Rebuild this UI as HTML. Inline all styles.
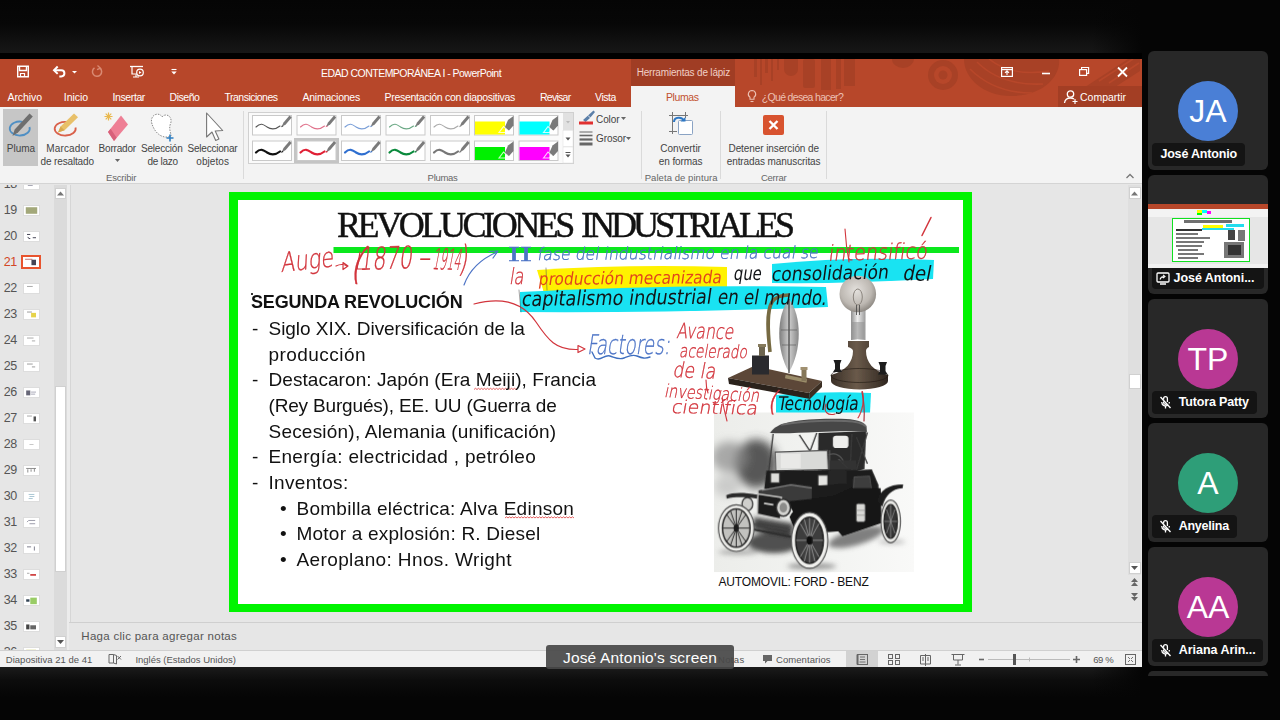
<!DOCTYPE html>
<html lang="es">
<head>
<meta charset="utf-8">
<title>EDAD CONTEMPORÁNEA I - PowerPoint</title>
<style>
*{box-sizing:border-box;margin:0;padding:0}
html,body{width:1280px;height:720px;overflow:hidden;background:#050505}
body{position:relative;font-family:"Liberation Sans",sans-serif;color:#444}
.abs{position:absolute}
#topgrad{left:0;top:0;width:1142px;height:53px;background:linear-gradient(#050505 0,#070707 45%,#171717 100%)}
#botgrad{left:0;top:667px;width:1142px;height:30px;background:linear-gradient(#1b1b1b 0,#0c0c0c 45%,#050505 100%)}
#screen{left:0;top:59px;width:1142px;height:608px;background:#e6e6e6;overflow:hidden}
/* ---- title bar ---- */
#titlebar{left:0;top:0;width:1142px;height:48px;background:#b7472a}
#titlebar .t{position:absolute;color:#fff;font-size:10.5px;white-space:nowrap;line-height:14px}
#ctx{left:631px;top:0;width:104px;height:27px;background:#a03d24}
#deco{left:737px;top:0;width:403px;height:48px;overflow:hidden}
.tab{position:absolute;top:30.5px;color:#fff;font-size:10.5px;line-height:14px;white-space:nowrap}
#plumastab{left:631px;top:27px;width:104px;height:22px;background:#f3f3f3;color:#c2512f;font-size:11px;text-align:center;line-height:24px}
/* ---- ribbon ---- */
#ribbon{left:0;top:48px;width:1142px;height:77px;background:#f3f3f3;border-bottom:1px solid #d4d4d4}
.rl{position:absolute;font-size:10px;line-height:13px;color:#444;white-space:nowrap}
.gl{position:absolute;font-size:9.5px;line-height:13px;color:#666;white-space:nowrap}
.sep{position:absolute;top:4px;width:1px;height:68px;background:#dadada}
/* ---- thumbs ---- */
.num{position:absolute;left:0;width:17px;text-align:right;font-size:12.5px;letter-spacing:-.3px;line-height:14px;color:#555}
.th{position:absolute;left:23px;width:17px;height:11px;background:#fff;border:1px solid #ddd}
/* ---- slide ---- */
#slide{left:229px;top:133px;width:743px;height:420px;background:#fff;border:9px solid #00f400;border-top-width:8px;border-bottom-width:8px}
.body{position:absolute;font-size:19px;line-height:26px;color:#111;white-space:nowrap}
.hw{position:absolute;white-space:nowrap;line-height:1;font-family:"DejaVu Sans",sans-serif}
/* ---- status ---- */
#notes{left:69px;top:563px;width:1073px;height:28px;background:#e6e6e6;border-top:1px solid #cfcfcf}
#status{left:0;top:591px;width:1142px;height:17px;background:#f1f1f1;border-top:1px solid #d0d0d0}
#status .s{position:absolute;top:3px;font-size:9.5px;line-height:11px;color:#555;white-space:nowrap}
/* ---- meet tiles ---- */
.tile{position:absolute;left:1148px;width:120px;height:119px;background:#282828;border-radius:6px;overflow:hidden}
.av{position:absolute;left:30px;top:30px;width:60px;height:60px;border-radius:50%;color:#fff;font-size:32px;line-height:60px;text-align:center}
.nm{position:absolute;left:4px;top:92px;height:23px;background:#141414;border-radius:4px;color:#fff;font-weight:bold;font-size:12.5px;line-height:23px;padding:0 8px;white-space:nowrap}
</style>
</head>
<body>
<div id="topgrad" class="abs"></div>
<div class="abs" style="left:0;top:53px;width:1142px;height:6px;background:#000"></div>
<div id="botgrad" class="abs"></div>
<div class="abs" style="left:1092px;top:0;width:50px;height:53px;background:linear-gradient(to right,rgba(5,5,5,0),#050505)"></div>
<div class="abs" style="left:1092px;top:667px;width:50px;height:30px;background:linear-gradient(to right,rgba(5,5,5,0),#050505)"></div>

<div id="screen" class="abs">

<div id="titlebar" class="abs">
  <div id="ctx" class="abs"></div>
  <div id="deco" class="abs">
    <svg width="403" height="48" viewBox="0 0 403 48">
      <g fill="#a84126">
        <rect x="17" y="0" width="3" height="18"/><rect x="23" y="0" width="2" height="26"/><rect x="28" y="0" width="3" height="14"/><rect x="34" y="0" width="2" height="22"/><rect x="40" y="0" width="2" height="11"/>
        <path d="M47 0h14v10a7 7 0 0 1-14 0z"/>
        <rect x="66" y="0" width="12" height="29" rx="2"/><rect x="84" y="0" width="10" height="31"/><rect x="99" y="0" width="5" height="30"/><rect x="107" y="0" width="11" height="27"/>
        <path d="M155 0h22a11 9 0 0 1-22 0z"/>
        <circle cx="206" cy="16" r="15"/>
        <path d="M227 0h95c2 16-14 36-46 37-28 1-49-17-49-37z"/>
        <path d="M345 30l46-30h12v12l-28 18z"/>
      </g>
      <circle cx="206" cy="16" r="9" fill="#b7472a"/><circle cx="206" cy="16" r="4.5" fill="#a84126"/>
      <g stroke="#b7472a" stroke-width="1.6" fill="none">
        <path d="M233 10q24 24 62 24"/><path d="M240 3q24 24 66 22"/><path d="M252 0q22 18 60 12"/><path d="M362 22l34-22M372 24l30-20"/>
      </g>
    </svg>
  </div>
  <!-- quick access icons -->
  <svg class="abs" style="left:16px;top:5px" width="170" height="18" viewBox="0 0 170 18" fill="none" stroke="#fff" stroke-width="1.4">
    <path d="M1.7 2.2h10.6v10.6h-10.6z"/><path d="M3.5 2.5v4h7v-4" /><path d="M4.5 12.5v-3h4v3" stroke-width="1.2"/>
    <path d="M38 6.2h7.3a3.1 3.1 0 0 1 0 6.2h-2" stroke-width="2"/><path d="M41.7 2.5l-3.7 3.7 3.7 3.7" stroke-width="2"/>
    <path d="M56 7l2.5 2.5 2.5-2.5z" fill="#fff" stroke="none"/>
    <g stroke="#d98a73"><path d="M84 4.2a4.6 4.6 0 1 1-5.5-.3" stroke-width="1.5"/><path d="M81.5 1.5l3 2.7-3.5 1.5" stroke-width="1.3"/></g>
    <path d="M114 2.5h13" stroke-width="1.3"/><path d="M116 3v7h5" stroke-width="1.2"/><circle cx="124" cy="8.5" r="3.3" stroke-width="1.2"/><path d="M123 7l2.5 1.5-2.5 1.5z" fill="#fff" stroke="none"/><path d="M120 10.5v2.5m-3 0h6" stroke-width="1.1"/>
    <path d="M155.5 5.5h5" stroke-width="1.1"/><path d="M155.3 7.5h5.4l-2.7 3z" fill="#fff" stroke="none"/>
  </svg>
  <div class="t" id="tt1" style="left:321px;top:7px;letter-spacing:-0.52px">EDAD CONTEMPORÁNEA I - PowerPoint</div>
  <div class="t" id="tt2" style="left:636.7px;top:7px;color:#f1cfc5;font-size:10px;letter-spacing:-0.19px">Herramientas de lápiz</div>
  <!-- window controls -->
  <svg class="abs" style="left:996px;top:4px" width="140" height="18" viewBox="0 0 140 18" fill="none" stroke="#fff" stroke-width="1.2">
    <rect x="5.6" y="4.6" width="10.8" height="8.8"/><path d="M5.6 6.6h10.8" /><path d="M11 12v-4m-2 1.8l2-2 2 2" stroke-width="1.1"/>
    <path d="M46 10.5h8" stroke-width="1.6"/>
    <rect x="83.6" y="6.6" width="7" height="5.8"/><path d="M85.6 6.5v-2h7v5.8h-2" />
    <path d="M122 4.5l9 9m0-9l-9 9" stroke-width="1.8"/>
  </svg>
  <!-- tabs -->
  <div class="tab" id="t0" style="left:7.5px;letter-spacing:-0.07px">Archivo</div>
  <div class="tab" id="t1" style="left:63.8px;letter-spacing:-0.05px">Inicio</div>
  <div class="tab" id="t2" style="left:112.5px;letter-spacing:-0.39px">Insertar</div>
  <div class="tab" id="t3" style="left:169.5px;letter-spacing:-0.45px">Diseño</div>
  <div class="tab" id="t4" style="left:224.5px;letter-spacing:-0.51px">Transiciones</div>
  <div class="tab" id="t5" style="left:302.5px;letter-spacing:-0.24px">Animaciones</div>
  <div class="tab" id="t6" style="left:384.5px;letter-spacing:-0.29px">Presentación con diapositivas</div>
  <div class="tab" id="t7" style="left:540px;letter-spacing:-0.73px">Revisar</div>
  <div class="tab" id="t8" style="left:595px;letter-spacing:-0.43px">Vista</div>
  <div id="plumastab" class="abs"></div><div class="tab" id="t11" style="left:666px;color:#c2512f;letter-spacing:-0.39px">Plumas</div>
  <svg class="abs" style="left:746px;top:30px" width="12" height="16" viewBox="0 0 12 16" fill="none" stroke="#ecc0b3" stroke-width="1.1"><path d="M6 1.5a3.7 3.7 0 0 0-2 6.8v2h4v-2a3.7 3.7 0 0 0-2-6.8z"/><path d="M4.5 12.5h3"/></svg>
  <div class="tab" id="t9" style="left:761.8px;color:#ecc0b3;font-size:10.5px;letter-spacing:-0.68px">¿Qué desea hacer?</div>
  <div class="abs" style="left:1058px;top:27px;width:84px;height:21px;background:#a33e24"></div>
  <svg class="abs" style="left:1063px;top:30px" width="16" height="16" viewBox="0 0 16 16" fill="none" stroke="#fff" stroke-width="1.3"><circle cx="7.5" cy="5" r="3.2"/><path d="M1.5 14c.5-4 3-5 6-5 1.5 0 2.5.3 3.5 1"/><path d="M12 10v5m-2.5-2.5h5" stroke-width="1.2"/></svg>
  <div class="tab" id="t10" style="left:1080.0px;letter-spacing:-0.01px">Compartir</div>
</div>


<div id="ribbon" class="abs">
  <div class="abs" style="left:3px;top:2px;width:35px;height:57px;background:#c6c6c6"></div>
  <!-- big icons -->
  <svg class="abs" style="left:0;top:3px" width="245" height="40" viewBox="0 0 245 40" fill="none">
    <path d="M29.5 17a10 7 0 1 1-7-5.2" stroke="#4f8fc4" stroke-width="1.8"/><path d="M12.5 26l2.2-6.5 14.8-16 3.3 3-14.8 16z" fill="#6e6e6e"/>
    <path d="M75.5 17.5a10.5 6.8 0 1 1-8-5.4" stroke="#d9604a" stroke-width="1.8"/><path d="M58 22.5l2.6-6 13.4-13 4 3.8-13.4 13z" fill="#e8c069"/><path d="M58 22.5l2.6-6 4 3.8z" fill="#d9a84e"/>
    <path d="M108 22l13-16.5 7 9-14 16.5z" fill="#ee7f95"/><path d="M108 22l2.6-3.2 6 9-2.6 3.2z" fill="#d8607a"/>
    <path d="M104.5 6.5h8m-4-4v8m-2.8-6.8l5.6 5.6m0-5.6l-5.6 5.6" stroke="#e9b84e" stroke-width="1.2"/>
    <path d="M152 14c-3-9 7-13 10-7 4-5 12 0 8 8-1 5 1 8 1 11-6 3-15 0-19-12z" fill="#fff" stroke="#8a8a8a" stroke-width="1" stroke-dasharray="1.5 1.2"/><path d="M170 24.5v7m-3.5-3.5h7" stroke="#2f7fc2" stroke-width="1.6"/>
    <path d="M206.6 3v24l5.4-5 3.7 8.5 3.2-1.5-3.7-8 7.5-.5z" fill="#fff" stroke="#777" stroke-width="1.1" stroke-linejoin="round"/>
  </svg>
  <svg class="abs" style="left:115px;top:52px" width="6" height="4"><path d="M0 0h5l-2.5 3z" fill="#666"/></svg>
  <div class="rl" id="r1" style="left:6.8px;top:34.5px;letter-spacing:0.01px">Pluma</div>
  <div class="rl" id="r2" style="left:46.3px;top:34.5px;letter-spacing:0.12px">Marcador</div>
  <div class="rl" id="r3" style="left:40.6px;top:47.5px;letter-spacing:-0.15px">de resaltado</div>
  <div class="rl" id="r4" style="left:98.6px;top:34.5px;letter-spacing:-0.19px">Borrador</div>
  <div class="rl" id="r5" style="left:141px;top:34.5px;letter-spacing:-0.20px">Selección</div>
  <div class="rl" id="r6" style="left:147.5px;top:47.5px;letter-spacing:-0.29px">de lazo</div>
  <div class="rl" id="r7" style="left:187.5px;top:34.5px;letter-spacing:-0.22px">Seleccionar</div>
  <div class="rl" id="r8" style="left:196.3px;top:47.5px;letter-spacing:0.06px">objetos</div>
  <div class="gl" id="g1" style="left:106px;top:63.7px;letter-spacing:-0.17px">Escribir</div>
  <div class="gl" id="g2" style="left:427.6px;top:63.7px;letter-spacing:-0.28px">Plumas</div>
  <div class="rl" id="r9" style="left:596px;top:5.5px;letter-spacing:-0.08px">Color</div>
  <div class="rl" id="r10" style="left:596px;top:25.3px;letter-spacing:-0.09px">Grosor</div>
  <div class="rl" id="r11" style="left:660.3px;top:34.5px;letter-spacing:0.01px">Convertir</div>
  <div class="rl" id="r12" style="left:658.8px;top:47.5px;letter-spacing:-0.09px">en formas</div>
  <div class="gl" id="g3" style="left:644.7px;top:63.7px;letter-spacing:0.06px">Paleta de pintura</div>
  <div class="rl" id="r13" style="left:728.5px;top:34.5px;letter-spacing:-0.09px">Detener inserción de</div>
  <div class="rl" id="r14" style="left:726.7px;top:47.5px;letter-spacing:-0.09px">entradas manuscritas</div>
  <div class="gl" id="g4" style="left:761px;top:63.7px;letter-spacing:-0.27px">Cerrar</div>
  <div class="sep" style="left:243px"></div>
  <!-- pen gallery -->
  <div class="abs" style="left:248px;top:5px;width:326px;height:52px;background:#fafafa;border:1px solid #d0d0d0"></div>
  <div class="abs" style="left:294px;top:31px;width:45px;height:25px;background:#c4c4c4"></div>
  <svg class="abs" style="left:248px;top:5px" width="326" height="52" viewBox="0 0 326 52"><g transform="translate(4,3)"><rect x=".5" y=".5" width="39" height="19.5" fill="#fff" stroke="#c9c9c9"/><path d="M4 12c5-5 8-2 11 0s8 3 13-1" fill="none" stroke="#555" stroke-width="1.1" stroke-linecap="round"/><path d="M29.5 12l2-4.5 6-7 2.2 2-6 7z" fill="#7a7a7a"/><path d="M29 12.3l1-2 1.5 1.2z" fill="#555"/></g><g transform="translate(48.5,3)"><rect x=".5" y=".5" width="39" height="19.5" fill="#fff" stroke="#c9c9c9"/><path d="M4 12c5-5 8-2 11 0s8 3 13-1" fill="none" stroke="#e0708a" stroke-width="1.1" stroke-linecap="round"/><path d="M29.5 12l2-4.5 6-7 2.2 2-6 7z" fill="#7a7a7a"/><path d="M29 12.3l1-2 1.5 1.2z" fill="#e0708a"/></g><g transform="translate(93,3)"><rect x=".5" y=".5" width="39" height="19.5" fill="#fff" stroke="#c9c9c9"/><path d="M4 12c5-5 8-2 11 0s8 3 13-1" fill="none" stroke="#7a9fd8" stroke-width="1.1" stroke-linecap="round"/><path d="M29.5 12l2-4.5 6-7 2.2 2-6 7z" fill="#7a7a7a"/><path d="M29 12.3l1-2 1.5 1.2z" fill="#7a9fd8"/></g><g transform="translate(137.5,3)"><rect x=".5" y=".5" width="39" height="19.5" fill="#fff" stroke="#c9c9c9"/><path d="M4 12c5-5 8-2 11 0s8 3 13-1" fill="none" stroke="#6aa884" stroke-width="1.1" stroke-linecap="round"/><path d="M29.5 12l2-4.5 6-7 2.2 2-6 7z" fill="#7a7a7a"/><path d="M29 12.3l1-2 1.5 1.2z" fill="#6aa884"/></g><g transform="translate(182,3)"><rect x=".5" y=".5" width="39" height="19.5" fill="#fff" stroke="#c9c9c9"/><path d="M4 12c5-5 8-2 11 0s8 3 13-1" fill="none" stroke="#aaa" stroke-width="1.1" stroke-linecap="round"/><path d="M29.5 12l2-4.5 6-7 2.2 2-6 7z" fill="#7a7a7a"/><path d="M29 12.3l1-2 1.5 1.2z" fill="#aaa"/></g><g transform="translate(4,28.5)"><rect x=".5" y=".5" width="39" height="19.5" fill="#fff" stroke="#c9c9c9"/><path d="M4 12c5-5 8-2 11 0s8 3 13-1" fill="none" stroke="#111" stroke-width="2.2" stroke-linecap="round"/><path d="M29.5 12l2-4.5 6-7 2.2 2-6 7z" fill="#7a7a7a"/><path d="M29 12.3l1-2 1.5 1.2z" fill="#111"/></g><g transform="translate(48.5,28.5)"><rect x=".5" y=".5" width="39" height="19.5" fill="#fff" stroke="#c9c9c9"/><path d="M4 12c5-5 8-2 11 0s8 3 13-1" fill="none" stroke="#e02035" stroke-width="2.2" stroke-linecap="round"/><path d="M29.5 12l2-4.5 6-7 2.2 2-6 7z" fill="#7a7a7a"/><path d="M29 12.3l1-2 1.5 1.2z" fill="#e02035"/></g><g transform="translate(93,28.5)"><rect x=".5" y=".5" width="39" height="19.5" fill="#fff" stroke="#c9c9c9"/><path d="M4 12c5-5 8-2 11 0s8 3 13-1" fill="none" stroke="#2f6fd0" stroke-width="2.2" stroke-linecap="round"/><path d="M29.5 12l2-4.5 6-7 2.2 2-6 7z" fill="#7a7a7a"/><path d="M29 12.3l1-2 1.5 1.2z" fill="#2f6fd0"/></g><g transform="translate(137.5,28.5)"><rect x=".5" y=".5" width="39" height="19.5" fill="#fff" stroke="#c9c9c9"/><path d="M4 12c5-5 8-2 11 0s8 3 13-1" fill="none" stroke="#0a8a3c" stroke-width="2.2" stroke-linecap="round"/><path d="M29.5 12l2-4.5 6-7 2.2 2-6 7z" fill="#7a7a7a"/><path d="M29 12.3l1-2 1.5 1.2z" fill="#0a8a3c"/></g><g transform="translate(182,28.5)"><rect x=".5" y=".5" width="39" height="19.5" fill="#fff" stroke="#c9c9c9"/><path d="M4 12c5-5 8-2 11 0s8 3 13-1" fill="none" stroke="#777" stroke-width="2.2" stroke-linecap="round"/><path d="M29.5 12l2-4.5 6-7 2.2 2-6 7z" fill="#7a7a7a"/><path d="M29 12.3l1-2 1.5 1.2z" fill="#777"/></g><g transform="translate(226,3)"><rect x=".5" y=".5" width="39" height="19.5" fill="#fff" stroke="#c9c9c9"/><rect x="1" y="6.5" width="30" height="13" fill="#ffff00"/><path d="M30.5 13l3.5-8 5.5-4v9.5l-4.5 5z" fill="#7a7a7a"/><path d="M25 17.5l4.5-6 3.5 3-2 3z" fill="none" stroke="#fff" stroke-opacity=".8" stroke-width="1.2"/></g><g transform="translate(270.5,3)"><rect x=".5" y=".5" width="39" height="19.5" fill="#fff" stroke="#c9c9c9"/><rect x="1" y="6.5" width="30" height="13" fill="#00ffff"/><path d="M30.5 13l3.5-8 5.5-4v9.5l-4.5 5z" fill="#7a7a7a"/><path d="M25 17.5l4.5-6 3.5 3-2 3z" fill="none" stroke="#fff" stroke-opacity=".8" stroke-width="1.2"/></g><g transform="translate(226,28.5)"><rect x=".5" y=".5" width="39" height="19.5" fill="#fff" stroke="#c9c9c9"/><rect x="1" y="6.5" width="30" height="13" fill="#00f000"/><path d="M30.5 13l3.5-8 5.5-4v9.5l-4.5 5z" fill="#7a7a7a"/><path d="M25 17.5l4.5-6 3.5 3-2 3z" fill="none" stroke="#fff" stroke-opacity=".8" stroke-width="1.2"/></g><g transform="translate(270.5,28.5)"><rect x=".5" y=".5" width="39" height="19.5" fill="#fff" stroke="#c9c9c9"/><rect x="1" y="6.5" width="30" height="13" fill="#ff00ff"/><path d="M30.5 13l3.5-8 5.5-4v9.5l-4.5 5z" fill="#7a7a7a"/><path d="M25 17.5l4.5-6 3.5 3-2 3z" fill="none" stroke="#fff" stroke-opacity=".8" stroke-width="1.2"/></g>
    <rect x="315" y="1" width="10" height="17" fill="#e1e1e1"/><path d="M318 9h4l-2 2.5z" fill="#bbb"/>
    <rect x="315" y="18.5" width="10" height="16" fill="#fff" stroke="#ddd" stroke-width=".5"/><path d="M317.5 25.5h5l-2.5 3z" fill="#555"/>
    <rect x="315" y="35" width="10" height="16" fill="#fff" stroke="#ddd" stroke-width=".5"/><path d="M317.5 40.5h5" stroke="#555" stroke-width="1"/><path d="M317.5 42.5h5l-2.5 3z" fill="#555"/>
  </svg>
  <!-- color / grosor -->
  <svg class="abs" style="left:578px;top:3px" width="18" height="36" viewBox="0 0 18 36" fill="none">
    <path d="M5 10l5-4.5 5.5-5 1.5 1.5-5 6-4.5 4z" fill="#5b7fa8"/><path d="M10 5.5l2.5 2.5" stroke="#fff" stroke-width=".8"/>
    <rect x="1" y="11.5" width="14" height="3" fill="#e03030"/>
    <path d="M1.5 22h13" stroke="#666" stroke-width="1"/><path d="M1.5 25.5h13" stroke="#666" stroke-width="1.6"/><path d="M1.5 29.5h13" stroke="#666" stroke-width="2.2"/><path d="M1.5 34h13" stroke="#666" stroke-width="3"/>
  </svg>
  <svg class="abs" style="left:621px;top:10px" width="6" height="4"><path d="M0 0h5l-2.5 3z" fill="#666"/></svg>
  <svg class="abs" style="left:626px;top:30px" width="6" height="4"><path d="M0 0h5l-2.5 3z" fill="#666"/></svg>
  <div class="sep" style="left:641px"></div>
  <!-- convertir -->
  <svg class="abs" style="left:668px;top:4px" width="28" height="28" viewBox="0 0 28 28" fill="none">
    <path d="M4.5 1v22M1 4.5h19M17.5 1v6M1 20.5h8" stroke="#777" stroke-width="1"/>
    <rect x="10.5" y="9.5" width="14" height="14" rx="1" fill="#fff" stroke="#8aa3c4" stroke-width="1"/>
    <path d="M6 11c0-5 8-6 10-1" stroke="#2f78c4" stroke-width="2"/><path d="M12.5 10.5h5v-4.5z" fill="#2f78c4"/>
  </svg>
  <div class="sep" style="left:720px"></div>
  <div class="abs" style="left:763px;top:8px;width:21px;height:20px;background:#d8532f;border-radius:2px"></div>
  <svg class="abs" style="left:763px;top:8px" width="21" height="20" viewBox="0 0 21 20"><path d="M6.5 6l8 8m0-8l-8 8" stroke="#fff" stroke-width="2.4"/></svg>
  <div class="sep" style="left:826px"></div>
  <svg class="abs" style="left:1125px;top:66px" width="10" height="6" viewBox="0 0 10 6"><path d="M1.5 5l3.5-3.5 3.5 3.5" stroke="#777" stroke-width="1.3" fill="none"/></svg>
</div>


<div class="abs" style="left:0;top:126px;width:71px;height:465px;overflow:hidden;background:#e6e6e6">
  <div style="position:absolute;left:0;top:-126px;width:71px;height:600px"><div class="num" style="top:118px;color:#555">18</div><div class="th" style="top:120px"><svg width="15" height="9" viewBox="0 0 17 11" style="display:block"><rect x="4" y="3" width="6" height="4" fill="#889"/></svg></div><div class="num" style="top:144px;color:#555">19</div><div class="th" style="top:146px"><svg width="15" height="9" viewBox="0 0 17 11" style="display:block"><rect x="1.5" y="1.5" width="14" height="8" fill="#a3a87a"/></svg></div><div class="num" style="top:170px;color:#555">20</div><div class="th" style="top:172px"><svg width="15" height="9" viewBox="0 0 17 11" style="display:block"><path d="M3 3h4M4 6q1 3 3 2M10 7h4" stroke="#445" stroke-width="1.2" fill="none"/></svg></div><div class="num" style="top:196px;color:#d24726">21</div><div class="th" style="top:196px;left:21px;width:20px;height:14px;border:2px solid #e8542e"><svg width="16" height="10" viewBox="0 0 17 11" style="display:block"><path d="M2 2.5h8" stroke="#b66" stroke-width="1"/><rect x="9" y="3" width="5" height="6" fill="#445"/></svg></div><div class="num" style="top:222px;color:#555">22</div><div class="th" style="top:224px"><svg width="15" height="9" viewBox="0 0 17 11" style="display:block"><path d="M3 3h7" stroke="#999" stroke-width="1"/></svg></div><div class="num" style="top:248px;color:#555">23</div><div class="th" style="top:250px"><svg width="15" height="9" viewBox="0 0 17 11" style="display:block"><path d="M3 2.5h6" stroke="#888" stroke-width="1"/><rect x="8" y="3.5" width="6" height="5.5" fill="#e6d34a"/></svg></div><div class="num" style="top:274px;color:#555">24</div><div class="th" style="top:276px"><svg width="15" height="9" viewBox="0 0 17 11" style="display:block"><path d="M3 2.5h8M9 6h4" stroke="#999" stroke-width="1"/></svg></div><div class="num" style="top:300px;color:#555">25</div><div class="th" style="top:302px"><svg width="15" height="9" viewBox="0 0 17 11" style="display:block"><path d="M3 2.5h7M9 6h4" stroke="#888" stroke-width="1"/></svg></div><div class="num" style="top:326px;color:#555">26</div><div class="th" style="top:328px"><svg width="15" height="9" viewBox="0 0 17 11" style="display:block"><rect x="2" y="3" width="5" height="6" fill="#667"/><path d="M8 5h6M8 7.5h5" stroke="#99a" stroke-width="1"/></svg></div><div class="num" style="top:352px;color:#555">27</div><div class="th" style="top:354px"><svg width="15" height="9" viewBox="0 0 17 11" style="display:block"><path d="M3 2.5h6" stroke="#999" stroke-width="1"/><rect x="11" y="3" width="3" height="6" fill="#555"/></svg></div><div class="num" style="top:378px;color:#555">28</div><div class="th" style="top:380px"><svg width="15" height="9" viewBox="0 0 17 11" style="display:block"><path d="M6 5.5h5" stroke="#bbb" stroke-width="1"/></svg></div><div class="num" style="top:404px;color:#555">29</div><div class="th" style="top:406px"><svg width="15" height="9" viewBox="0 0 17 11" style="display:block"><path d="M2 3h12M4 4v4M8 4v3M12 3v4" stroke="#777" stroke-width="1"/></svg></div><div class="num" style="top:430px;color:#555">30</div><div class="th" style="top:432px"><svg width="15" height="9" viewBox="0 0 17 11" style="display:block"><path d="M5 3h7M6 5.5h6M5 8h5" stroke="#9bc" stroke-width="1"/></svg></div><div class="num" style="top:456px;color:#555">31</div><div class="th" style="top:458px"><svg width="15" height="9" viewBox="0 0 17 11" style="display:block"><path d="M3 5l2-2h8M6 7h7" stroke="#889" stroke-width="1" fill="none"/></svg></div><div class="num" style="top:482px;color:#555">32</div><div class="th" style="top:484px"><svg width="15" height="9" viewBox="0 0 17 11" style="display:block"><path d="M3 3.5h5M12 3v5" stroke="#667" stroke-width="1"/></svg></div><div class="num" style="top:508px;color:#555">33</div><div class="th" style="top:510px"><svg width="15" height="9" viewBox="0 0 17 11" style="display:block"><path d="M3 4h3" stroke="#999" stroke-width="1"/><path d="M7 6h7" stroke="#c33" stroke-width="2"/></svg></div><div class="num" style="top:534px;color:#555">34</div><div class="th" style="top:536px"><svg width="15" height="9" viewBox="0 0 17 11" style="display:block"><rect x="2" y="4" width="4" height="3" fill="#345"/><rect x="7" y="2" width="8" height="8" fill="#9c6"/></svg></div><div class="num" style="top:560px;color:#555">35</div><div class="th" style="top:562px"><svg width="15" height="9" viewBox="0 0 17 11" style="display:block"><rect x="2" y="3" width="4" height="6" fill="#444"/><rect x="7" y="4" width="7" height="5" fill="#666"/></svg></div><div class="num" style="top:586px;color:#555">36</div><div class="th" style="top:588px"><svg width="15" height="9" viewBox="0 0 17 11" style="display:block"><rect x="2" y="2" width="12" height="7" fill="#dd9"/></svg></div></div>
  <div class="abs" style="left:54px;top:0;width:13px;height:465px;background:#dbdbdb"></div>
  <div class="abs" style="left:55px;top:3px;width:11px;height:11px;background:#fff;border:1px solid #d0d0d0"></div>
  <svg class="abs" style="left:57px;top:6px" width="7" height="5"><path d="M0 4.5h7l-3.5-4z" fill="#777"/></svg>
  <div class="abs" style="left:55px;top:201px;width:11px;height:186px;background:#fff;border:1px solid #d0d0d0"></div>
  <div class="abs" style="left:55px;top:451px;width:11px;height:12px;background:#fff;border:1px solid #d0d0d0"></div>
  <svg class="abs" style="left:57px;top:455px" width="7" height="5"><path d="M0 0h7l-3.5 4z" fill="#555"/></svg>
  <div class="abs" style="left:67px;top:0;width:4px;height:465px;background:#ececec;border-right:1px solid #d6d6d6"></div>
</div>
<!-- main scrollbar -->
<div class="abs" style="left:1128px;top:126px;width:13px;height:390px;background:#dfdfdf"></div>
<div class="abs" style="left:1129px;top:128px;width:12px;height:12px;background:#fff;border:1px solid #d0d0d0"></div>
<svg class="abs" style="left:1131px;top:132px" width="7" height="5"><path d="M0 4.5h7l-3.5-4z" fill="#777"/></svg>
<div class="abs" style="left:1129px;top:315px;width:12px;height:15px;background:#fff;border:1px solid #d0d0d0"></div>
<div class="abs" style="left:1129px;top:503px;width:12px;height:12px;background:#fff;border:1px solid #d0d0d0"></div>
<svg class="abs" style="left:1131px;top:507px" width="7" height="5"><path d="M0 0h7l-3.5 4z" fill="#555"/></svg>
<svg class="abs" style="left:1131px;top:519px" width="8" height="24" viewBox="0 0 8 24" fill="#666"><path d="M0 4h7l-3.5-4zM0 8h7l-3.5-4z"/><path d="M0 15h7l-3.5 4zM0 19h7l-3.5 4z"/></svg>


<div id="slide" class="abs"></div>
<div id="pg" class="abs" style="left:0;top:-59px;width:1142px;height:720px">
  <!-- highlights -->
  <svg class="abs" style="left:0;top:0" width="1142" height="720" viewBox="0 0 1142 720">
    <defs><filter id="b1" x="-5%" y="-5%" width="110%" height="110%"><feGaussianBlur stdDeviation="0.7"/></filter>
    <filter id="b2" x="-20%" y="-20%" width="140%" height="140%"><feGaussianBlur stdDeviation="5"/></filter>
    <filter id="b3" x="-20%" y="-20%" width="140%" height="140%"><feGaussianBlur stdDeviation="1.6"/></filter></defs>
    <rect x="333.5" y="247" width="625.5" height="6" fill="#0be81d"/>
    <path d="M537 270q90-6 190-3v22q-90 6-183 4z" fill="#fff200"/>
    <path d="M772 264q80-8 162-4l-1 19q-90 5-161 4z" fill="#19e3f2"/>
    <path d="M520 292q150-8 306-5l2 20q-150 6-308 5z" fill="#19e3f2"/>
    <path d="M776 395q50-4 95-2l-1 20q-50 2-94 0z" fill="#19e3f2"/>

    <defs>
      <radialGradient id="gl" cx=".45" cy=".4" r=".6"><stop offset="0" stop-color="#e4e1dd"/><stop offset=".7" stop-color="#bdb8b2"/><stop offset="1" stop-color="#8f8a84"/></radialGradient>
      <linearGradient id="nk" x1="0" x2="1"><stop offset="0" stop-color="#8e8e8e"/><stop offset=".45" stop-color="#ededed"/><stop offset="1" stop-color="#9a9a9a"/></linearGradient>
      <linearGradient id="bs" x1="0" x2="1"><stop offset="0" stop-color="#3a2f27"/><stop offset=".45" stop-color="#6a5a4a"/><stop offset="1" stop-color="#2e251f"/></linearGradient>
      <linearGradient id="tb" x1="0" x2="1"><stop offset="0" stop-color="#6f6f6f"/><stop offset=".5" stop-color="#c9c9c9"/><stop offset="1" stop-color="#7a7a7a"/></linearGradient>
    </defs>
    <g filter="url(#b1)">
      <path d="M728 378l26-12 68 15-13 12z" fill="#5b4737"/>
      <path d="M728 378l81 15 1 6-81-15z" fill="#2b211a"/>
      <path d="M809 393l13-12v6l-12 12z" fill="#3a2d23"/>
      <path d="M770 352c-2-18-4-40 2-50 4-6 10-7 17-7" fill="none" stroke="#766a42" stroke-width="3.6"/>
      <rect x="752" y="355.5" width="17" height="19" fill="#2a2a2d"/>
      <rect x="759" y="345" width="6" height="11" fill="#6d654f"/><rect x="758" y="344" width="8" height="3" fill="#857a5c"/>
      <path d="M789 299c-13 16-13 52 0 73 13-21 13-57 0-73z" fill="url(#tb)" opacity=".9"/>
      <path d="M789 299v74" stroke="#3c3c3c" stroke-width="1.2"/>
      <path d="M781 330h16M782 345h14" stroke="#555" stroke-width="1" opacity=".6"/>
      <rect x="785" y="377" width="22" height="3.5" fill="#9b8d6a" transform="rotate(12 796 379)"/>
      <rect x="801.5" y="368" width="5" height="13" fill="#85775a"/><rect x="800.5" y="367" width="7" height="3" fill="#a09070"/>
      <!-- right bulb -->
      <rect x="851" y="308" width="14.5" height="32" fill="url(#nk)"/>
      <circle cx="857.8" cy="294" r="18.3" fill="url(#gl)"/>
      <ellipse cx="857.8" cy="297" rx="4.5" ry="8" fill="none" stroke="#8b857e" stroke-width="1"/>
      <path d="M856.5 305v10M859.5 305v10" stroke="#444" stroke-width=".8"/>
      <rect x="852" y="322" width="12.5" height="17" fill="#8f8f8f" opacity=".55"/>
      <path d="M848 341h21v6c-2 1-3 2-3 4 0 11 7 20 22 24v6a28.5 8.5 0 0 1-57 0v-6c15-4 22-13 22-24 0-2-2-3-5-4z" fill="url(#bs)"/>
      <ellipse cx="859.5" cy="375.5" rx="28.5" ry="7" fill="none" stroke="#1f1813" stroke-width="1" opacity=".6"/>
      <path d="M833.5 360h8l-1.5 4v5l2 3h-9l2-3v-5z" fill="#1b1b1d"/>
      <path d="M878.5 362h8.5l-1.5 4v5l2 3.5h-9.5l2-3.5v-5z" fill="#1b1b1d"/>
    </g>


    <defs>
      <linearGradient id="cbg" x1="0" x2="1"><stop offset="0" stop-color="#ecedea"/><stop offset=".6" stop-color="#f3f4f2"/><stop offset="1" stop-color="#f9f9f8"/></linearGradient>
      <clipPath id="cc"><rect x="0" y="0" width="900" height="720"/></clipPath>
      <filter id="c1" x="-10%" y="-10%" width="120%" height="120%"><feGaussianBlur stdDeviation="3.2"/></filter>
      <filter id="c2" x="-30%" y="-30%" width="160%" height="160%"><feGaussianBlur stdDeviation="22"/></filter>
      <filter id="c3" x="-30%" y="-30%" width="160%" height="160%"><feGaussianBlur stdDeviation="12"/></filter>
    </defs>
    <g transform="translate(714 412.5) scale(.2222)">
      <rect x="0" y="0" width="900" height="718" fill="url(#cbg)"/>
      <g clip-path="url(#cc)">
        <g filter="url(#c2)">
          <ellipse cx="190" cy="230" rx="95" ry="110" fill="#3c3c3c" opacity=".85"/>
          <ellipse cx="70" cy="200" rx="80" ry="70" fill="#8a8a8a" opacity=".7"/>
          <ellipse cx="60" cy="330" rx="60" ry="50" fill="#aaa" opacity=".5"/>
        </g>
        <g filter="url(#c3)">
          <ellipse cx="270" cy="585" rx="120" ry="48" fill="#3e3e3e" opacity=".9"/>
          <ellipse cx="640" cy="560" rx="130" ry="36" fill="#6a6a6a" opacity=".85" transform="rotate(-16 640 560)"/>
          <ellipse cx="440" cy="692" rx="110" ry="13" fill="#666" opacity=".7"/>
          <ellipse cx="110" cy="628" rx="90" ry="11" fill="#777" opacity=".6"/>
          <ellipse cx="800" cy="582" rx="60" ry="9" fill="#888" opacity=".6"/>
          <path d="M180 470l180 30-10 60-180-30z" fill="#2c2c2c" opacity=".9"/>
        </g>
        <g filter="url(#c1)">
          <!-- back panel under roof -->
          <path d="M470 92l215-8-8 170-60 16-150-10z" fill="#2a2a2a"/>
          <rect x="535" y="104" width="70" height="56" rx="14" fill="#eeeeec"/>
          <!-- roof canopy -->
          <path d="M252 92c14-24 40-40 90-50 60-12 140-16 230-14 60 2 104 10 114 34l2 26c-60-6-140-4-220 0-90 4-160 8-216 4z" fill="#474747"/>
          <path d="M300 56c60-14 180-22 290-18 50 2 80 10 92 24" fill="none" stroke="#6a6a6a" stroke-width="8"/>
          <!-- struts -->
          <path d="M266 96l-30 250M462 92l-110 300M384 100l130 200M620 96l-10 200M690 90l-50 170M640 110l50 120" stroke="#3a3a3a" stroke-width="6" fill="none"/>
          <!-- windshield -->
          <path d="M275 178l235-8 4 86-236 6z" fill="#d9dad8" stroke="#555" stroke-width="5"/>
          <path d="M300 185h90v65h-90z" fill="#f0f0ee" opacity=".7"/>
          <!-- interior clutter -->
          <path d="M515 190c30-10 60 0 70 40M520 170v100M560 210l40 40" stroke="#555" stroke-width="6" fill="none"/>
          <rect x="520" y="215" width="120" height="60" fill="#333" opacity=".85"/>
          <!-- cowl / dashboard band -->
          <path d="M236 262l290-4 20 76-320 10z" fill="#1e1e1e"/>
          <path d="M515 258l100-2 0 90-100 0z" fill="#252525"/>
          <!-- cowl lamps -->
          <path d="M255 272h40v44h-40z" fill="#dededb" stroke="#333" stroke-width="4"/><path d="M468 282h44v48h-44z" fill="#e4e4e1" stroke="#333" stroke-width="4"/>
          <!-- rear seat / body -->
          <path d="M600 262l110-6 30 70 6 150-150 30z" fill="#1c1c1c"/>
          <path d="M630 290l70-4 10 70-84 6z" fill="#3c3c3c" stroke="#666" stroke-width="3"/>
          <!-- hood -->
          <path d="M200 350l150-30 140 20-60 70-130 10-100-30z" fill="#3b3b3b"/>
          <path d="M215 350l130-24 120 18" stroke="#8a8a8a" stroke-width="5" fill="none"/>
          <path d="M440 330l180-10 10 90-190 10z" fill="#1b1b1b"/>
          <!-- main body side -->
          <path d="M330 400l200-20 90-40 130 0 4 150-140 40-120 10-120-60z" fill="#161616"/>
          <!-- radiator -->
          <path d="M197 366l106 16-4 98-104-22z" fill="#1b1b1b" stroke="#c4c4c2" stroke-width="7"/>
          <path d="M225 408l42 7" stroke="#d0d0ce" stroke-width="8"/>
          <!-- headlamps -->
          <ellipse cx="150" cy="412" rx="24" ry="30" fill="#cfcfcc" stroke="#3a3a3a" stroke-width="6"/>
          <ellipse cx="312" cy="428" rx="32" ry="38" fill="#d5d5d2" stroke="#2a2a2a" stroke-width="7"/>
          <ellipse cx="312" cy="428" rx="17" ry="22" fill="#8c8c8a"/>
          <!-- front-left fender -->
          <path d="M55 372c30-14 80-14 140-2l-2 18c-50-8-100-10-136 0z" fill="#2a2a2a"/>
          <!-- centre fender + running board -->
          <path d="M340 470c30-60 110-100 170-50l80 100 160-50 8 26-180 60-70-80c-40-40-100-20-150 40z" fill="#131313"/>
          <!-- rear fender -->
          <path d="M735 400c10-50 50-76 116-76l-2 16c-50 4-76 30-92 84z" fill="#1e1e1e"/>
          <!-- tank -->
          <rect x="640" y="410" width="40" height="82" rx="8" fill="#d8d8d5" stroke="#555" stroke-width="4"/>
          <path d="M640 440h40M640 462h40" stroke="#888" stroke-width="3"/>
          <!-- axle / springs -->
          <path d="M150 520l250 50" stroke="#2f2f2f" stroke-width="9"/>
          <path d="M170 500l170 30" stroke="#444" stroke-width="5"/>
          <!-- wheels -->
          <ellipse cx="100" cy="520" rx="80" ry="105" fill="#ecece9" stroke="#4a4a4a" stroke-width="5"/>
          <ellipse cx="100" cy="520" rx="62" ry="86" fill="#c2c2bf" stroke="#2e2e2e" stroke-width="7"/>
          <path d="M100 436v168M40 520h120M56 458l88 124M144 458l-88 124M74 442l52 156M126 442l-52 156" stroke="#2a2a2a" stroke-width="4.5"/>
          <ellipse cx="100" cy="520" rx="12" ry="16" fill="#1e1e1e"/>
          <ellipse cx="430" cy="575" rx="82" ry="126" fill="#f0f0ed" stroke="#4a4a4a" stroke-width="5"/>
          <ellipse cx="430" cy="575" rx="62" ry="104" fill="#3d3d3d" stroke="#222" stroke-width="7"/>
          <path d="M430 474v202M370 575h120M388 500l84 150M472 500l-84 150M406 480l48 190M454 480l-48 190" stroke="#9a9a9a" stroke-width="4"/>
          <ellipse cx="430" cy="575" rx="14" ry="20" fill="#111"/>
          <ellipse cx="795" cy="490" rx="44" ry="96" fill="#eaeae7" stroke="#4a4a4a" stroke-width="5"/>
          <ellipse cx="795" cy="490" rx="30" ry="76" fill="#353535" stroke="#222" stroke-width="6"/>
          <path d="M795 416v148M766 490h58M776 436l38 108M814 436l-38 108" stroke="#8f8f8f" stroke-width="3.5"/>
        </g>
      </g>
    </g>
    <path d="M474 389.5L475.5 388.3L477.0 389.5L478.5 388.3L480.0 389.5L481.5 388.3L483.0 389.5L484.5 388.3L486.0 389.5L487.5 388.3L489.0 389.5L490.5 388.3L492.0 389.5L493.5 388.3L495.0 389.5L496.5 388.3L498.0 389.5L499.5 388.3L501.0 389.5L502.5 388.3L504.0 389.5L505.5 388.3L507.0 389.5L508.5 388.3L510.0 389.5L511.5 388.3L513.0 389.5L514.5 388.3L516.0 389.5L517.5 388.3" stroke="#e03a3a" stroke-width=".8" fill="none"/>
    <path d="M505 518L506.5 516.8L508.0 518.0L509.5 516.8L511.0 518.0L512.5 516.8L514.0 518.0L515.5 516.8L517.0 518.0L518.5 516.8L520.0 518.0L521.5 516.8L523.0 518.0L524.5 516.8L526.0 518.0L527.5 516.8L529.0 518.0L530.5 516.8L532.0 518.0L533.5 516.8L535.0 518.0L536.5 516.8L538.0 518.0L539.5 516.8L541.0 518.0L542.5 516.8L544.0 518.0L545.5 516.8L547.0 518.0L548.5 516.8L550.0 518.0L551.5 516.8L553.0 518.0L554.5 516.8L556.0 518.0L557.5 516.8L559.0 518.0L560.5 516.8L562.0 518.0L563.5 516.8L565.0 518.0L566.5 516.8L568.0 518.0L569.5 516.8L571.0 518.0L572.5 516.8L574.0 518.0" stroke="#e03a3a" stroke-width=".8" fill="none"/>
    <g fill="none" stroke-linecap="round" stroke-linejoin="round">
      <path d="M336 266q6-3 11 0M343 262.5l5 3.5-5 3.5z" stroke="#d2343c" stroke-width="1.2"/>
      <path d="M360 252l-3 17h8" stroke="#d2343c" stroke-width="1.2"/>
      <path d="M464 285c5-14 17-26 33-33M489 251.5l9-.5-5 7" stroke="#4d74c6" stroke-width="1.2"/>
      <path d="M474 304c30-8 50 0 62 18s20 28 41 27.5M578 345.5l7 3.5-7 3.5z" stroke="#d2343c" stroke-width="1.2"/>
      <path d="M592 352l3 6c6 4 9-4 15-2s9 4 14 2 8-4 13-2 8 3 13 1" stroke="#3f6fc0" stroke-width="1.4"/>
      <path d="M931 217.5l-9 18" stroke="#d2343c" stroke-width="1.5"/>
      <path d="M845 229q1 17 4 33" stroke="#d2343c" stroke-width="1.1"/>
      <path d="M862 392q3 14 2 29" stroke="#a8323c" stroke-width="1.2"/>
      <path d="M826 404c-3 8 2 12 9 10" stroke="#c8343c" stroke-width="1.1"/>
      <path d="M706 380q0 7 2 13M722 398q2 12 5 23" stroke="#d2343c" stroke-width="1.1"/>
      <path d="M546 268l1 22M519 290l2 22" stroke="#555" stroke-width=".9" opacity=".6"/>
    </g>

  </svg>
  <div class="abs" style="left:0px;top:204.5px;font-family:'Liberation Serif',serif;font-size:36px;line-height:40px;color:#111;-webkit-text-stroke:.45px #111;white-space:nowrap;"><span id="ti1" style="position:absolute;left:337px;top:0;letter-spacing:-3.42px">REVOLUCIONES</span><span id="ti2" style="position:absolute;left:581px;top:0;letter-spacing:-4.00px">INDUSTRIALES</span></div>
  <div id="h1" class="body" style="left:251px;top:289.0px;font-weight:bold;font-size:18px;letter-spacing:-0.16px">SEGUNDA REVOLUCIÓN</div>
  <div class="abs" style="left:251px;top:293px;width:2px;height:2px;background:#333"></div>
  <div class="body" style="left:252px;top:316.0px">-</div>
  <div id="l1" class="body" style="left:268.5px;top:316.0px;letter-spacing:-0.04px">Siglo XIX. Diversificación de la</div>
  <div id="l2" class="body" style="left:268.5px;top:341.6px;letter-spacing:0.45px">producción</div>
  <div class="body" style="left:252px;top:367.3px">-</div>
  <div id="l3" class="body" style="left:268.5px;top:367.3px;letter-spacing:0.06px">Destacaron: Japón (Era Meiji), Francia</div>
  <div id="l4" class="body" style="left:268.5px;top:392.9px;letter-spacing:-0.17px">(Rey Burgués), EE. UU (Guerra de</div>
  <div id="l5" class="body" style="left:268.5px;top:418.6px;letter-spacing:0.21px">Secesión), Alemania (unificación)</div>
  <div class="body" style="left:252px;top:444.2px">-</div>
  <div id="l6" class="body" style="left:268.5px;top:444.2px;letter-spacing:0.31px">Energía: electricidad , petróleo</div>
  <div class="body" style="left:252px;top:469.9px">-</div>
  <div id="l7" class="body" style="left:268.5px;top:469.9px;letter-spacing:0.32px">Inventos:</div>
  <div class="body" style="left:280px;top:495.5px">•</div>
  <div id="l8" class="body" style="left:296.5px;top:495.5px;letter-spacing:0.26px">Bombilla eléctrica: Alva Edinson</div>
  <div class="body" style="left:280px;top:521.2px">•</div>
  <div id="l9" class="body" style="left:296.5px;top:521.2px;letter-spacing:0.23px">Motor a explosión: R. Diesel</div>
  <div class="body" style="left:280px;top:546.9px">•</div>
  <div id="l10" class="body" style="left:296.5px;top:546.9px;letter-spacing:0.38px">Aeroplano: Hnos. Wright</div>
  <div id="cap" class="body" style="left:718.5px;top:573px;font-size:12px;line-height:18px;letter-spacing:-0.17px">AUTOMOVIL: FORD - BENZ</div>
<!--HAND-->
  <div class="hw" style="-webkit-text-stroke:.35px;left:281px;top:249.2px;font-size:27px;color:#d2343c;font-weight:200;transform-origin:0 22.8px;transform:rotate(-6deg) skewX(-9deg) scaleX(0.775)">Auge</div>
  <div class="hw" style="-webkit-text-stroke:.35px;left:348px;top:239.8px;font-size:44px;color:#d2343c;font-weight:200;transform-origin:0 37.2px;transform:rotate(8deg) skewX(-9deg) scaleX(0.874)">(</div>
  <div class="hw" style="-webkit-text-stroke:.35px;left:359px;top:244.3px;font-size:31px;color:#d2343c;font-weight:200;transform-origin:0 26.2px;transform:rotate(-2deg) skewX(-9deg) scaleX(0.672)">1870</div>
  <div class="hw" style="-webkit-text-stroke:.35px;left:418px;top:244.3px;font-size:28px;color:#d2343c;font-weight:200;transform-origin:0 23.7px;transform:rotate(0deg) skewX(-9deg) scaleX(0.857)">–</div>
  <div class="hw" style="-webkit-text-stroke:.35px;left:432px;top:245.0px;font-size:29px;color:#d2343c;font-weight:200;transform-origin:0 24.5px;transform:rotate(2deg) skewX(-9deg) scaleX(0.379)">1914</div>
  <div class="hw" style="-webkit-text-stroke:.35px;left:458px;top:240.5px;font-size:36px;color:#d2343c;font-weight:200;transform-origin:0 30.5px;transform:rotate(0deg) skewX(-9deg) scaleX(0.641)">)</div>
  <div class="hw" style="-webkit-text-stroke:.35px;font-family:'Liberation Serif',serif;left:508px;top:243.4px;font-size:22px;color:#4d74c6;font-weight:400;transform-origin:0 18.6px;transform:rotate(0deg) skewX(0deg) scaleX(1.638)">II</div>
  <div class="hw" style="-webkit-text-stroke:.35px;left:537px;top:246.1px;font-size:17px;color:#4d74c6;font-weight:200;transform-origin:0 14.4px;transform:rotate(-0.4deg) skewX(-9deg) scaleX(0.921)">fase del industrialismo en la cual se</div>
  <div class="hw" style="-webkit-text-stroke:.35px;left:828px;top:243.4px;font-size:22px;color:#d2343c;font-weight:200;transform-origin:0 18.6px;transform:rotate(-1.5deg) skewX(-9deg) scaleX(0.875)">intensificó</div>
  <div class="hw" style="-webkit-text-stroke:.35px;left:508.5px;top:266.4px;font-size:22px;color:#d2343c;font-weight:200;transform-origin:0 18.6px;transform:rotate(0deg) skewX(-9deg) scaleX(0.740)">la</div>
  <div class="hw" style="left:538px;top:270.7px;font-size:17.5px;color:#e2451c;font-weight:400;transform-origin:0 14.8px;transform:rotate(-0.6deg) skewX(-9deg) scaleX(0.879)">producción mecanizada</div>
  <div class="hw" style="left:733px;top:264.4px;font-size:19px;color:#121417;font-weight:400;transform-origin:0 16.1px;transform:rotate(0deg) skewX(-9deg) scaleX(0.782)">que</div>
  <div class="hw" style="left:771px;top:264.5px;font-size:19.5px;color:#121417;font-weight:400;transform-origin:0 16.5px;transform:rotate(-1.2deg) skewX(-9deg) scaleX(0.882)">consolidación</div>
  <div class="hw" style="left:902px;top:263.2px;font-size:21px;color:#121417;font-weight:400;transform-origin:0 17.8px;transform:rotate(2deg) skewX(-9deg) scaleX(0.872)">del</div>
  <div class="hw" style="left:521px;top:288.7px;font-size:20.5px;color:#121417;font-weight:400;transform-origin:0 17.3px;transform:rotate(-0.7deg) skewX(-9deg) scaleX(0.863)">capitalismo industrial</div>
  <div class="hw" style="left:717px;top:286.7px;font-size:20.5px;color:#121417;font-weight:400;transform-origin:0 17.3px;transform:rotate(0.5deg) skewX(-9deg) scaleX(0.810)">en el mundo.</div>
  <div class="hw" style="-webkit-text-stroke:.35px;left:587px;top:331.2px;font-size:27px;color:#4d74c6;font-weight:200;transform-origin:0 22.8px;transform:rotate(0deg) skewX(-9deg) scaleX(0.681)">Factores:</div>
  <div class="hw" style="-webkit-text-stroke:.35px;left:676px;top:320.7px;font-size:21px;color:#d2343c;font-weight:200;transform-origin:0 17.8px;transform:rotate(1deg) skewX(-9deg) scaleX(0.748)">Avance</div>
  <div class="hw" style="-webkit-text-stroke:.35px;left:679px;top:341.8px;font-size:18px;color:#d2343c;font-weight:200;transform-origin:0 15.2px;transform:rotate(1deg) skewX(-9deg) scaleX(0.764)">acelerado</div>
  <div class="hw" style="-webkit-text-stroke:.35px;left:672px;top:359.7px;font-size:21px;color:#d2343c;font-weight:200;transform-origin:0 17.8px;transform:rotate(2deg) skewX(-9deg) scaleX(0.833)">de la</div>
  <div class="hw" style="-webkit-text-stroke:.35px;left:664px;top:381.8px;font-size:18px;color:#d2343c;font-weight:200;transform-origin:0 15.2px;transform:rotate(3deg) skewX(-9deg) scaleX(0.800)">investigación</div>
  <div class="hw" style="-webkit-text-stroke:.35px;left:671px;top:397.8px;font-size:18px;color:#d2343c;font-weight:200;transform-origin:0 15.2px;transform:rotate(1deg) skewX(-9deg) scaleX(1.053)">científica</div>
  <div class="hw" style="-webkit-text-stroke:.35px;left:766px;top:387.3px;font-size:28px;color:#d2343c;font-weight:200;transform-origin:0 23.7px;transform:rotate(6deg) skewX(-9deg) scaleX(1.006)">(</div>
  <div class="hw" style="left:777px;top:394.4px;font-size:19px;color:#121417;font-weight:400;transform-origin:0 16.1px;transform:rotate(0deg) skewX(-9deg) scaleX(0.809)">Tecnología</div>
  <div class="hw" style="-webkit-text-stroke:.35px;left:856px;top:388.6px;font-size:30px;color:#d2343c;font-weight:200;transform-origin:0 25.4px;transform:rotate(0deg) skewX(-9deg) scaleX(0.683)">)</div>
<!--/HAND-->
</div>


<div id="notes" class="abs"><div class="abs" style="left:12.3px;top:6px;font-size:11.5px;line-height:14px;color:#555;white-space:nowrap;letter-spacing:0.29px" id="notestxt">Haga clic para agregar notas</div></div>
<div id="status" class="abs">
  <div class="s" id="st1" style="left:5.8px;letter-spacing:0.02px">Diapositiva 21 de 41</div>
  <svg class="abs" style="left:108px;top:2px" width="14" height="12" viewBox="0 0 14 12" fill="none" stroke="#666" stroke-width="1"><path d="M1 1.5h4.5v8.5h-4.5zM5.5 1.5l3 1v8.5l-3-1"/><path d="M9.5 3l3.5 3.5m0-3.5l-3.5 3.5"/></svg>
  <div class="s" id="st2" style="left:135.4px;letter-spacing:-0.02px">Inglés (Estados Unidos)</div>
  <div class="s" id="st3" style="left:718.0px;letter-spacing:0.33px">Notas</div>
  <svg class="abs" style="left:762px;top:3px" width="11" height="11" viewBox="0 0 11 11"><path d="M1 1h9v6h-4.5l-2.5 2.5v-2.5h-2z" fill="#666"/></svg>
  <div class="s" id="st4" style="left:776px;letter-spacing:0.07px">Comentarios</div>
  <div class="abs" style="left:846px;top:0;width:32px;height:16px;background:#d2d2d2"></div>
  <svg class="abs" style="left:846px;top:1px" width="290" height="15" viewBox="0 0 290 15" fill="none" stroke="#666" stroke-width="1">
    <rect x="11.5" y="2.5" width="10" height="10"/><path d="M14 5h5M14 7.5h5M13.5 10h6" stroke-width=".9"/><path d="M11.5 2.5v10" stroke-width="2"/>
    <rect x="42.5" y="2.5" width="4" height="4"/><rect x="49.5" y="2.5" width="4" height="4"/><rect x="42.5" y="8.5" width="4" height="4"/><rect x="49.5" y="8.5" width="4" height="4"/>
    <path d="M74.5 3.5h5v8.5h-5zM79.5 3.5h5v8.5h-5zM76 6h2M76 8h2M81 6h2M81 8h2M79.5 2v12"/>
    <path d="M105.5 2.5h13M107.5 3v5h9v-5M112 8v4.5M109 13h6"/>
    <path d="M133 7.5h5" stroke-width="1.6"/>
    <path d="M142 7.5h82" stroke="#bbb"/><path d="M183.5 5.5v4" stroke="#bbb"/>
    <rect x="167" y="2" width="3" height="11" fill="#555" stroke="none"/>
    <path d="M227 7.5h7M230.5 4v7" stroke-width="1.6"/>
    <rect x="279.5" y="2.5" width="10" height="10"/><path d="M282 5l2 2M287 5l-2 2M282 10l2-2M287 10l-2-2" stroke-width=".9"/>
  </svg>
  <div class="s" id="st5" style="left:1093.2px;letter-spacing:-0.41px">69 %</div>
</div>

</div>

<div class="tile" style="top:51px"><div class="av" style="background:#4a7fd6;font-size:32px">JA</div><div class="nm" style="padding-left:8px"><span id="nm51" style="position:relative;left:0.4px;letter-spacing:-0.18px">José Antonio</span></div></div><div class="tile" style="top:175px">
  <div class="abs" style="left:0;top:29px;width:120px;height:64px;background:#e6e6e6;overflow:hidden">
    <div class="abs" style="left:0;top:0;width:120px;height:5px;background:#b7472a"></div>
    <div class="abs" style="left:0;top:5px;width:120px;height:8px;background:#f3f3f3"></div>
    <div class="abs" style="left:49px;top:6px;width:5px;height:3px;background:#ff0"></div><div class="abs" style="left:54px;top:6px;width:5px;height:3px;background:#0ff"></div><div class="abs" style="left:59px;top:7px;width:4px;height:3px;background:#f0f"></div><div class="abs" style="left:49px;top:9px;width:5px;height:2px;background:#0f0"></div>
    <div class="abs" style="left:24px;top:14px;width:78px;height:44px;background:#fff;border:1px solid #10e020"></div>
    <div class="abs" style="left:36px;top:16px;width:48px;height:3px;background:#333;opacity:.7"></div>
    <div class="abs" style="left:55px;top:21px;width:20px;height:3px;background:#ff0"></div><div class="abs" style="left:78px;top:20px;width:18px;height:3px;background:#2de"></div><div class="abs" style="left:54px;top:24px;width:32px;height:2px;background:#2de"></div>
    <div class="abs" style="left:28px;top:25px;width:26px;height:2px;background:#333"></div>
    <div class="abs" style="left:28px;top:29px;width:22px;height:2px;background:#777"></div><div class="abs" style="left:28px;top:33px;width:34px;height:2px;background:#777"></div><div class="abs" style="left:28px;top:37px;width:28px;height:2px;background:#777"></div><div class="abs" style="left:28px;top:41px;width:26px;height:2px;background:#777"></div><div class="abs" style="left:30px;top:45px;width:20px;height:2px;background:#777"></div><div class="abs" style="left:30px;top:49px;width:26px;height:2px;background:#777"></div><div class="abs" style="left:30px;top:53px;width:20px;height:2px;background:#777"></div>
    <div class="abs" style="left:80px;top:26px;width:7px;height:10px;background:#444"></div><div class="abs" style="left:90px;top:26px;width:7px;height:11px;background:#777"></div>
    <div class="abs" style="left:76px;top:38px;width:20px;height:16px;background:#777"></div><div class="abs" style="left:80px;top:41px;width:13px;height:10px;background:#333"></div>
    <div class="abs" style="left:0;top:60px;width:120px;height:4px;background:#f1f1f1"></div>
  </div>
  <div class="nm" style="top:93px;height:21px;line-height:21px;padding-left:22px;border-radius:0 0 4px 4px;width:112px"><svg style="position:absolute;left:4px;top:4px" width="14" height="13" viewBox="0 0 14 13" fill="none" stroke="#fff" stroke-width="1.3"><rect x="1" y="1" width="12" height="9" rx="1"/><path d="M4 12h6"/><path d="M4 7.5c.5-2 2-3 4-3M7 2.8l2 1.7-2 1.7" stroke-width="1.1"/></svg><span id="nm175" style="position:relative;left:-0.5px;letter-spacing:-0.04px">José Antoni...</span></div>
</div><div class="tile" style="top:299px"><div class="av" style="background:#b93894;font-size:32px">TP</div><div class="nm" style="padding-left:26.5px"><svg style="position:absolute;left:6px;top:4px" width="15" height="15" viewBox="0 0 15 15" fill="none" stroke="#fff" stroke-width="1.3"><path d="M5.6 4.5v-1a1.9 1.9 0 0 1 3.8 0v3.5M9 8.6a1.9 1.9 0 0 1-3.4-1.1v-1"/><path d="M3.7 7a3.8 3.8 0 0 0 6.5 2.7M11.3 7a3.8 3.8 0 0 1-.3 1.5M7.5 11v2.5"/><path d="M2.5 2l10 11" stroke-width="1.4"/></svg><span id="nm299" style="position:relative;left:0.2px;letter-spacing:-0.15px">Tutora Patty</span></div></div><div class="tile" style="top:423px"><div class="av" style="background:#2e9e78;font-size:32px">A</div><div class="nm" style="padding-left:26.5px"><svg style="position:absolute;left:6px;top:4px" width="15" height="15" viewBox="0 0 15 15" fill="none" stroke="#fff" stroke-width="1.3"><path d="M5.6 4.5v-1a1.9 1.9 0 0 1 3.8 0v3.5M9 8.6a1.9 1.9 0 0 1-3.4-1.1v-1"/><path d="M3.7 7a3.8 3.8 0 0 0 6.5 2.7M11.3 7a3.8 3.8 0 0 1-.3 1.5M7.5 11v2.5"/><path d="M2.5 2l10 11" stroke-width="1.4"/></svg><span id="nm423" style="position:relative;left:0.2px;letter-spacing:-0.24px">Anyelina</span></div></div><div class="tile" style="top:547px"><div class="av" style="background:#b93894;font-size:32px">AA</div><div class="nm" style="padding-left:26.5px"><svg style="position:absolute;left:6px;top:4px" width="15" height="15" viewBox="0 0 15 15" fill="none" stroke="#fff" stroke-width="1.3"><path d="M5.6 4.5v-1a1.9 1.9 0 0 1 3.8 0v3.5M9 8.6a1.9 1.9 0 0 1-3.4-1.1v-1"/><path d="M3.7 7a3.8 3.8 0 0 0 6.5 2.7M11.3 7a3.8 3.8 0 0 1-.3 1.5M7.5 11v2.5"/><path d="M2.5 2l10 11" stroke-width="1.4"/></svg><span id="nm547" style="position:relative;left:0.2px;letter-spacing:-0.03px">Ariana Arin...</span></div></div><div class="tile" style="top:671px;height:5px;border-radius:6px 6px 0 0"></div>
<div class="abs" style="left:546px;top:645px;width:188px;height:24px;background:rgba(72,72,72,.92);border-radius:3px;color:#fff;font-size:15.5px;line-height:25px;text-align:center;white-space:nowrap"><span id="scap" style="position:relative;left:0px;letter-spacing:0.18px">José Antonio's screen</span></div>
</body>
</html>
